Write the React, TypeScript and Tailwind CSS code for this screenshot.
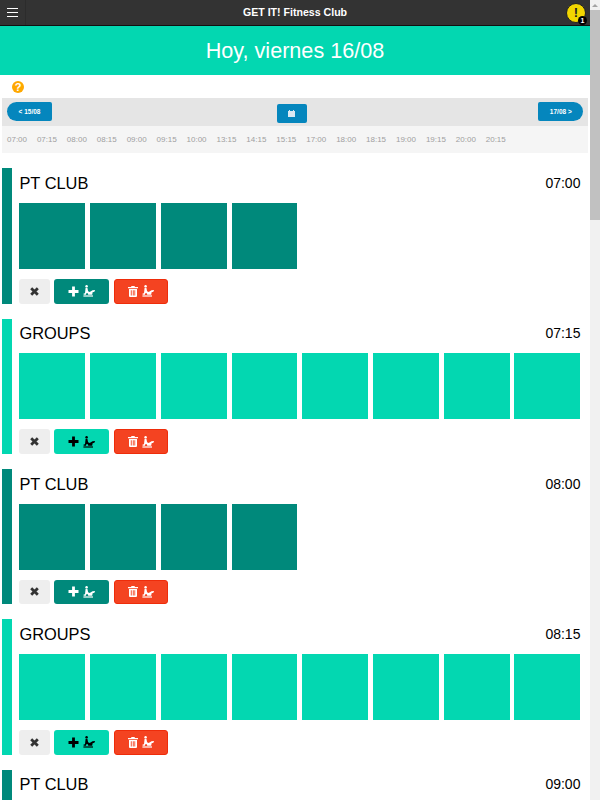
const times = ["07:00","07:15","08:00","08:15","09:00","09:15","10:00","13:15","14:15","15:15","17:00","18:00","18:15","19:00","19:15","20:00","20:15"];

function Machine({ color }: { color: string }) {
  return (
    <svg width="13" height="12" viewBox="0 0 13 12" fill={color}>
      <circle cx="3.6" cy="1.3" r="1.2" />
      <path d="M2.6 2.8h1.8l.7 3.4 1.6.8 2.8-1.7 2.6-.4-.7 1.8-1.8.5-.4 2.6H5.2l-.3-1.6H3.2l-.2 1.6H.6V8.6l1.4-.3z" />
      <path d="M.4 10.4h9.6v1.2H.4z" />
    </svg>
  );
}

function X() {
  return (
    <svg width="9" height="9" viewBox="0 0 9 9">
      <path d="M1.2 1.2l6.6 6.6M7.8 1.2L1.2 7.8" stroke="#333" strokeWidth="2.8" />
    </svg>
  );
}

function Plus({ color }: { color: string }) {
  return (
    <svg width="11" height="11" viewBox="0 0 11 11">
      <path d="M5.5 0.5v10M0.5 5.5h10" stroke={color} strokeWidth="2.8" />
    </svg>
  );
}

function Trash() {
  return (
    <svg width="10" height="11" viewBox="0 0 10 11" fill="#fff">
      <path d="M3.5 0h3l.5 1h3v1.2H0V1h3z" />
      <path d="M1 3h8v7a1 1 0 0 1-1 1H2a1 1 0 0 1-1-1zm1.8 1.2v5.4h.9V4.2zm2 0v5.4h.9V4.2zm1.6 0v5.4h.8V4.2z" fillRule="evenodd" />
    </svg>
  );
}

function Row({ title, time, color, count, dark }: { title: string; time: string; color: string; count: number; dark: boolean }) {
  return (
    <div className="flex h-[135.33px] mb-[15px] shrink-0">
      <div className="w-[9.4px] shrink-0" style={{ backgroundColor: color }} />
      <div className="ml-[7.75px] w-[561px] flex flex-col">
        <div className="flex justify-between items-center h-[34.8px] pb-[5px] text-black">
          <span className="text-[16.4px] leading-none">{title}</span>
          <span className="text-[14px] leading-none">{time}</span>
        </div>
        <div className="grid grid-cols-[repeat(8,65.92px)] gap-x-[4.8px] h-[66px]">
          {Array.from({ length: count }).map((_, i) => (
            <div key={i} className="h-[66px]" style={{ backgroundColor: color }} />
          ))}
        </div>
        <div className="flex mt-[10px] h-[25px]">
          <div className="w-[31px] rounded-[3px] bg-[#eeeeee] flex items-center justify-center"><X /></div>
          <div className="ml-[4px] w-[54.4px] rounded-[3px] flex items-center justify-center gap-[4px]" style={{ backgroundColor: color }}>
            <Plus color={dark ? "#fff" : "#000"} />
            <Machine color={dark ? "#fff" : "#000"} />
          </div>
          <div className="ml-[5px] w-[54.4px] rounded-[3px] bg-[#f44321] border border-[#ee2c0a] flex items-center justify-center gap-[4px]">
            <Trash />
            <Machine color="#fff" />
          </div>
        </div>
      </div>
    </div>
  );
}

export default function App() {
  const pt = "#00897b";
  const gr = "#03d7b1";
  return (
    <div className="flex w-[600px] h-[800px] overflow-hidden bg-white font-['Liberation_Sans',Arial,sans-serif]">
      <div className="w-[590px] shrink-0 flex flex-col overflow-hidden">
        <div className="h-[26px] shrink-0 bg-[#333333] border-b border-[#111111] flex items-center justify-between relative">
          <div className="w-[26px] h-[25px] flex flex-col items-center justify-center gap-[2.5px] border-r border-[#2c2c2c]">
            <div className="w-[11px] h-[1.5px] bg-white" />
            <div className="w-[11px] h-[1.5px] bg-white" />
            <div className="w-[11px] h-[1.5px] bg-white" />
          </div>
          <span className="text-white font-bold text-[10.6px] leading-none mr-[2px]">GET IT! Fitness Club</span>
          <div className="relative w-[20px] h-[20px] mr-[4px] rounded-full bg-[#f2d600] border border-[#222] flex items-center justify-center">
            <span className="text-[#222] font-bold text-[13px] leading-none">!</span>
            <span className="absolute right-[-2px] bottom-[-3px] w-[9px] h-[9px] rounded-full bg-black text-white font-bold text-[7px] leading-[9px] text-center">1</span>
          </div>
        </div>
        <div className="h-[49px] shrink-0 pt-[1px] bg-[#03d7b1] flex items-center justify-center text-white text-[21.6px]">Hoy, viernes 16/08</div>
        <div className="h-[23px] shrink-0 flex items-center pl-[12px] pt-[1px]">
          <div className="w-[12px] h-[12px] rounded-full bg-[#ffa800] text-white font-bold text-[11px] leading-[12px] text-center">?</div>
        </div>
        <div className="ml-[2.3px] w-[586px] h-[28px] shrink-0 bg-[#e5e5e5] flex items-center justify-between pl-[4.7px] pr-[5px]">
          <div className="w-[45px] h-[19px] mb-[1px] rounded-l-[10px] rounded-r-[2px] bg-[#0586bd] text-white text-[6.5px] font-bold flex items-center justify-center">&lt; 15/08</div>
          <div className="w-[30px] h-[19px] mt-[2px] mr-[7px] rounded-[2px] bg-[#0586bd] flex items-center justify-center">
            <svg width="7" height="7" viewBox="0 0 7 7" fill="#dbe9f3"><path d="M0 1h7v6H0zM1 0h1v1H1zM5 0h1v1H5z" /></svg>
          </div>
          <div className="w-[45px] h-[19px] mb-[1px] rounded-r-[10px] rounded-l-[2px] bg-[#0586bd] text-white text-[6.5px] font-bold flex items-center justify-center">17/08 &gt;</div>
        </div>
        <div className="ml-[2.3px] w-[586px] h-[27px] shrink-0 bg-[#f5f5f5] flex items-center pl-[4.7px] gap-[9.9px] text-[#a0a0a0] text-[8px] mb-[15.3px]">
          {times.map((t) => <span key={t}>{t}</span>)}
        </div>
        <div className="pl-[2.3px] flex flex-col">
          <Row title="PT CLUB" time="07:00" color={pt} count={4} dark />
          <Row title="GROUPS" time="07:15" color={gr} count={8} dark={false} />
          <Row title="PT CLUB" time="08:00" color={pt} count={4} dark />
          <Row title="GROUPS" time="08:15" color={gr} count={8} dark={false} />
          <Row title="PT CLUB" time="09:00" color={pt} count={4} dark />
        </div>
      </div>
      <div className="w-[10px] shrink-0 bg-[#f1f1f1] flex flex-col">
        <div className="h-[10px] flex items-center justify-center">
          <div className="w-0 h-0 border-x-[3px] border-x-transparent border-b-[3px] border-b-[#a3a3a3]" />
        </div>
        <div className="h-[210px] bg-[#c1c1c1]" />
      </div>
    </div>
  );
}
